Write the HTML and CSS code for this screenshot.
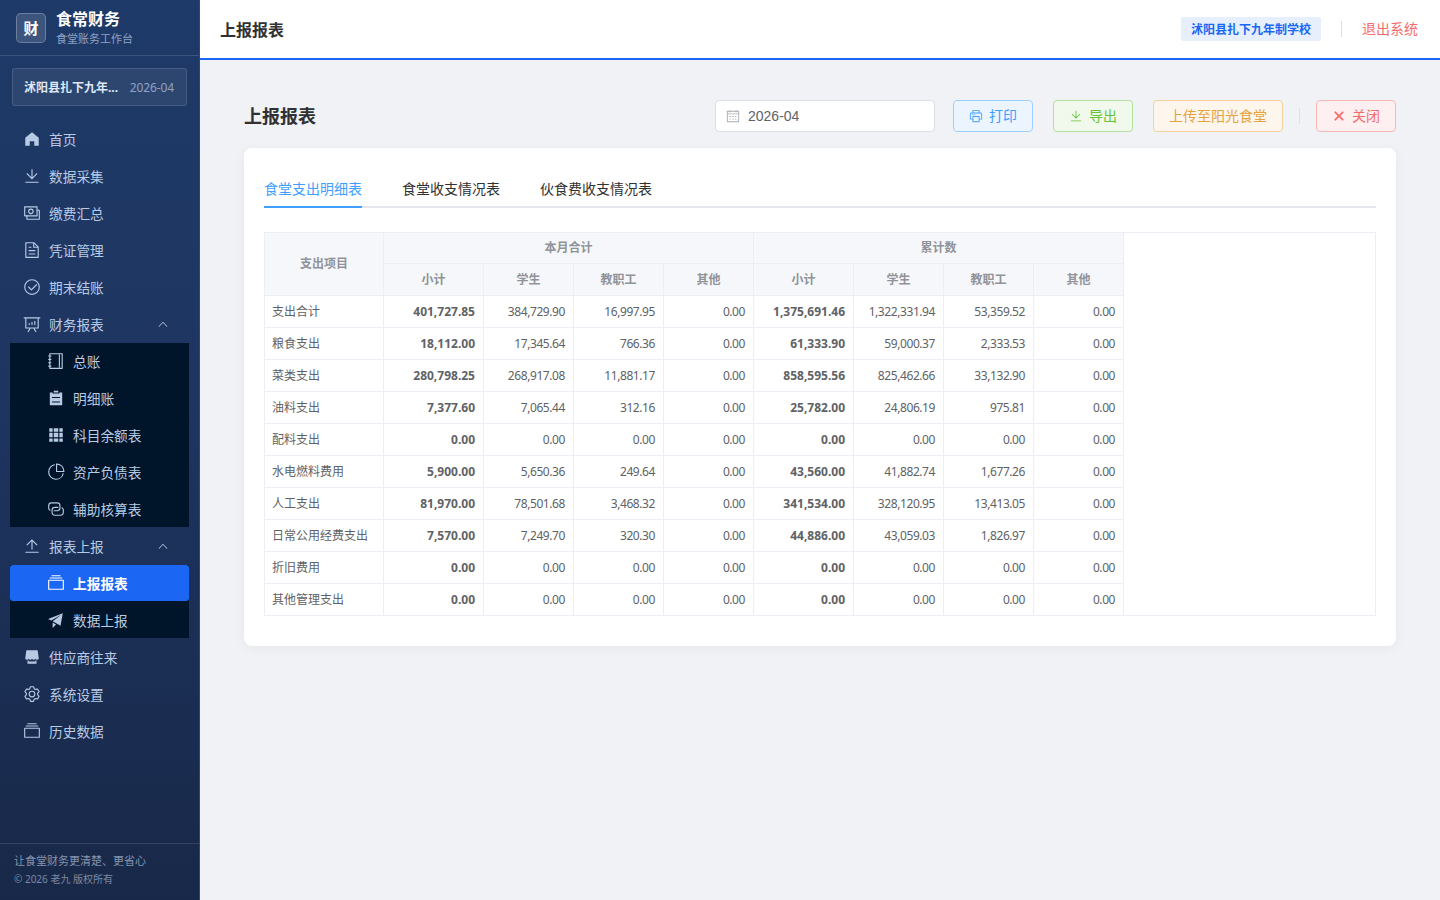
FILE: index.html
```html
<!DOCTYPE html>
<html lang="zh-CN">
<head>
<meta charset="utf-8">
<title>上报报表</title>
<link rel="stylesheet" href="styles.css">
</head>
<body>
<svg class="sprite" aria-hidden="true">
  <symbol id="i-home" viewBox="0 0 1024 1024"><path d="M512 128 128 447.936V896h255.936V640H640v256h255.936V447.936z"/></symbol>
  <symbol id="i-download" viewBox="0 0 1024 1024"><path d="M160 832h704a32 32 0 1 1 0 64H160a32 32 0 1 1 0-64m384-253.696 236.288-236.352 45.248 45.248L508.8 704 192 387.2l45.248-45.248L480 584.704V128h64z"/></symbol>
  <symbol id="i-upload" viewBox="0 0 1024 1024"><path d="M160 832h704a32 32 0 1 1 0 64H160a32 32 0 1 1 0-64m384-578.304V704h-64V247.296L237.248 490.048 192 444.8 508.8 128l316.8 316.8-45.312 45.248z"/></symbol>
  <symbol id="i-money" viewBox="0 0 1024 1024"><path d="M256 640v192h640V384H768v-64h150.976c14.272 0 19.456 1.472 24.64 4.288a29.056 29.056 0 0 1 12.16 12.096c2.752 5.184 4.224 10.368 4.224 24.64v493.952c0 14.272-1.472 19.456-4.288 24.64a29.056 29.056 0 0 1-12.096 12.16c-5.184 2.752-10.368 4.224-24.64 4.224H233.024c-14.272 0-19.456-1.472-24.64-4.288a29.056 29.056 0 0 1-12.16-12.096c-2.688-5.184-4.224-10.368-4.224-24.576V640z"/><path d="M768 192H128v448h640zm64-22.976v493.952c0 14.272-1.472 19.456-4.288 24.64a29.056 29.056 0 0 1-12.096 12.16c-5.184 2.752-10.368 4.224-24.64 4.224H105.024c-14.272 0-19.456-1.472-24.64-4.288a29.056 29.056 0 0 1-12.16-12.096C65.536 682.432 64 677.248 64 663.04V169.024c0-14.272 1.472-19.456 4.288-24.64a29.056 29.056 0 0 1 12.096-12.16C85.568 129.536 90.752 128 104.96 128h685.952c14.272 0 19.456 1.472 24.64 4.288a29.056 29.056 0 0 1 12.16 12.096c2.752 5.184 4.224 10.368 4.224 24.64z"/><path d="M448 576a160 160 0 1 1 0-320 160 160 0 0 1 0 320m0-64a96 96 0 1 0 0-192 96 96 0 0 0 0 192"/></symbol>
  <symbol id="i-document" viewBox="0 0 1024 1024"><path d="M832 384H576V128H192v768h640zm-26.496-64L640 154.496V320zM160 64h480l256 256v608a32 32 0 0 1-32 32H160a32 32 0 0 1-32-32V96a32 32 0 0 1 32-32m160 448h384v64H320zm0-192h160v64H320zm0 384h384v64H320z"/></symbol>
  <symbol id="i-check" viewBox="0 0 1024 1024"><path d="M512 896a384 384 0 1 0 0-768 384 384 0 0 0 0 768m0 64a448 448 0 1 1 0-896 448 448 0 0 1 0 896"/><path d="M745.344 361.344a32 32 0 0 1 45.312 45.312l-288 288a32 32 0 0 1-45.312 0l-160-160a32 32 0 1 1 45.312-45.312L480 626.752z"/></symbol>
  <symbol id="i-analysis" viewBox="0 0 1024 1024"><path d="m665.216 768 110.848 192h-73.856L591.36 768H433.024L322.176 960H248.32l110.848-192H160a32 32 0 0 1-32-32V192H64a32 32 0 0 1 0-64h896a32 32 0 1 1 0 64h-64v544a32 32 0 0 1-32 32zM832 192H192v512h640zM352 448a32 32 0 0 1 32 32v64a32 32 0 0 1-64 0v-64a32 32 0 0 1 32-32m160-64a32 32 0 0 1 32 32v128a32 32 0 0 1-64 0V416a32 32 0 0 1 32-32m160-64a32 32 0 0 1 32 32v192a32 32 0 1 1-64 0V352a32 32 0 0 1 32-32"/></symbol>
  <symbol id="i-arrow-up" viewBox="0 0 1024 1024"><path d="m488.832 344.32-339.84 356.672a32 32 0 0 0 0 44.16l.384.384a29.44 29.44 0 0 0 42.688 0l320-335.872 319.872 335.872a29.44 29.44 0 0 0 42.688 0l.384-.384a32 32 0 0 0 0-44.16L535.168 344.32a32 32 0 0 0-46.336 0"/></symbol>
  <symbol id="i-notebook" viewBox="0 0 1024 1024"><path d="M192 128v768h640V128zm-32-64h704a32 32 0 0 1 32 32v832a32 32 0 0 1-32 32H160a32 32 0 0 1-32-32V96a32 32 0 0 1 32-32"/><path d="M672 128h64v768h-64zM96 192h128q32 0 32 32t-32 32H96q-32 0-32-32t32-32m0 192h128q32 0 32 32t-32 32H96q-32 0-32-32t32-32m0 192h128q32 0 32 32t-32 32H96q-32 0-32-32t32-32m0 192h128q32 0 32 32t-32 32H96q-32 0-32-32t32-32"/></symbol>
  <symbol id="i-list" viewBox="0 0 1024 1024"><path d="M704 192h160v736H160V192h160v64h384zM288 512h448v-64H288zm0 256h448v-64H288zm96-576V96h256v96z"/></symbol>
  <symbol id="i-grid" viewBox="0 0 1024 1024"><path d="M640 384v256H384V384zm64 0h192v256H704zm-64 512H384V704h256zm64 0V704h192v192zm-64-768v192H384V128zm64 0h192v192H704zM320 384v256H128V384zm0 512H128V704h192zm0-768v192H128V128z"/></symbol>
  <symbol id="i-pie" viewBox="0 0 1024 1024"><path d="M448 68.48v64.832A384.128 384.128 0 0 0 512 896a384.128 384.128 0 0 0 378.688-320h64.768A448.128 448.128 0 0 1 64 512 448.128 448.128 0 0 1 448 68.48z"/><path d="M576 97.28V448h350.72A384.064 384.064 0 0 0 576 97.28zM512 64V33.152A448 448 0 0 1 990.848 512H512V64z"/></symbol>
  <symbol id="i-connection" viewBox="0 0 1024 1024"><path d="M640 384v64H448a128 128 0 0 0-128 128v128a128 128 0 0 0 128 128h320a128 128 0 0 0 128-128V576a128 128 0 0 0-64-110.848V394.88c74.56 26.368 128 97.472 128 181.056v128a192 192 0 0 1-192 192H448a192 192 0 0 1-192-192V576a192 192 0 0 1 192-192z"/><path d="M384 640v-64h192a128 128 0 0 0 128-128V320a128 128 0 0 0-128-128H256a128 128 0 0 0-128 128v128a128 128 0 0 0 64 110.848v70.272A192.064 192.064 0 0 1 64 448V320a192 192 0 0 1 192-192h320a192 192 0 0 1 192 192v128a192 192 0 0 1-192 192z"/></symbol>
  <symbol id="i-files" viewBox="0 0 1024 1024"><path d="M128 384v448h768V384zm-32-64h832a32 32 0 0 1 32 32v512a32 32 0 0 1-32 32H96a32 32 0 0 1-32-32V352a32 32 0 0 1 32-32m64-128h704v64H160zm96-128h512v64H256z"/></symbol>
  <symbol id="i-promotion" viewBox="0 0 1024 1024"><path d="m64 448 832-320-128 704-446.08-243.328L832 192 242.816 545.472zm256 512V657.024L512 768z"/></symbol>
  <symbol id="i-shop" viewBox="0 0 1024 1024"><path d="M704 704h64v192H256V704h64v64h384zm188.544-152.192C894.528 559.616 896 567.616 896 576a96 96 0 1 1-192 0 96 96 0 1 1-192 0 96 96 0 1 1-192 0 96 96 0 1 1-192 0c0-8.384 1.408-16.384 3.392-24.192L192 128h640z"/></symbol>
  <symbol id="i-setting" viewBox="0 0 1024 1024"><path d="M600.704 64a32 32 0 0 1 30.464 22.208l35.2 109.376c14.784 7.232 28.928 15.36 42.432 24.512l112.384-24.192a32 32 0 0 1 34.432 15.36L944.32 364.8a32 32 0 0 1-4.032 37.504l-77.12 85.12a357.12 357.12 0 0 1 0 49.024l77.12 85.248a32 32 0 0 1 4.032 37.504l-88.704 153.6a32 32 0 0 1-34.432 15.296L708.8 803.904c-13.44 9.088-27.648 17.28-42.368 24.512l-35.264 109.376A32 32 0 0 1 600.704 960H423.296a32 32 0 0 1-30.464-22.208L357.696 828.48a351.616 351.616 0 0 1-42.56-24.64l-112.32 24.256a32 32 0 0 1-34.432-15.36L79.68 659.2a32 32 0 0 1 4.032-37.504l77.12-85.248a357.12 357.12 0 0 1 0-48.896l-77.12-85.248A32 32 0 0 1 79.68 364.8l88.704-153.6a32 32 0 0 1 34.432-15.296l112.32 24.256c13.568-9.152 27.776-17.408 42.56-24.64l35.2-109.312A32 32 0 0 1 423.232 64H600.64zm-23.424 64H446.72l-36.352 113.088-24.512 11.968a294.113 294.113 0 0 0-34.816 20.096l-22.656 15.36-116.224-25.088-65.28 113.152 79.68 88.192-1.92 27.136a293.12 293.12 0 0 0 0 40.192l1.92 27.136-79.808 88.192 65.344 113.152 116.224-25.024 22.656 15.296a294.113 294.113 0 0 0 34.816 20.096l24.512 11.968L446.72 896h130.688l36.48-113.152 24.448-11.904a288.282 288.282 0 0 0 34.752-20.096l22.592-15.296 116.288 25.024 65.28-113.152-79.744-88.192 1.92-27.136a293.12 293.12 0 0 0 0-40.256l-1.92-27.136 79.808-88.128-65.344-113.152-116.288 24.96-22.592-15.232a287.616 287.616 0 0 0-34.752-20.096l-24.448-11.904L577.344 128zM512 320a192 192 0 1 1 0 384 192 192 0 0 1 0-384m0 64a128 128 0 1 0 0 256 128 128 0 0 0 0-256"/></symbol>
  <symbol id="i-calendar" viewBox="0 0 1024 1024"><path d="M128 384v512h768V192H768v32a32 32 0 1 1-64 0v-32H320v32a32 32 0 0 1-64 0v-32H128v128h768v64zm192-256h384V96a32 32 0 1 1 64 0v32h160a32 32 0 0 1 32 32v768a32 32 0 0 1-32 32H96a32 32 0 0 1-32-32V160a32 32 0 0 1 32-32h160V96a32 32 0 0 1 64 0zm-32 384h64a32 32 0 0 1 0 64h-64a32 32 0 0 1 0-64m0 192h64a32 32 0 1 1 0 64h-64a32 32 0 1 1 0-64m192-192h64a32 32 0 0 1 0 64h-64a32 32 0 0 1 0-64m0 192h64a32 32 0 1 1 0 64h-64a32 32 0 1 1 0-64m192-192h64a32 32 0 1 1 0 64h-64a32 32 0 1 1 0-64m0 192h64a32 32 0 1 1 0 64h-64a32 32 0 1 1 0-64"/></symbol>
  <symbol id="i-printer" viewBox="0 0 1024 1024"><path d="M256 768H105.024c-14.272 0-19.456-1.472-24.64-4.288a29.056 29.056 0 0 1-12.16-12.096C65.536 746.432 64 741.248 64 727.04V379.072c0-42.816 4.48-58.304 12.8-73.984 8.384-15.616 20.672-27.904 36.288-36.288 15.68-8.32 31.168-12.8 73.984-12.8H256V64h512v192h68.928c42.816 0 58.304 4.48 73.984 12.8 15.616 8.384 27.904 20.672 36.288 36.288 8.32 15.68 12.8 31.168 12.8 73.984v347.904c0 14.272-1.472 19.456-4.288 24.64a29.056 29.056 0 0 1-12.096 12.16c-5.184 2.752-10.368 4.224-24.64 4.224H768v192H256zm64-192v320h384V576zm-64 128V512h512v192h128V379.072c0-29.376-1.408-36.48-5.248-43.776a23.296 23.296 0 0 0-10.048-10.048c-7.232-3.84-14.4-5.248-43.776-5.248H187.072c-29.376 0-36.48 1.408-43.776 5.248a23.296 23.296 0 0 0-10.048 10.048c-3.84 7.232-5.248 14.4-5.248 43.776V704zm64-448h384V128H320zm-64 128h64v64h-64zm128 0h64v64h-64z"/></symbol>
  <symbol id="i-close" viewBox="0 0 1024 1024"><path d="M195.2 195.2a64 64 0 0 1 90.496 0L512 421.504 738.304 195.2a64 64 0 0 1 90.496 90.496L602.496 512 828.8 738.304a64 64 0 0 1-90.496 90.496L512 602.496 285.696 828.8a64 64 0 0 1-90.496-90.496L421.504 512 195.2 285.696a64 64 0 0 1 0-90.496"/></symbol>
</svg>

<div class="app">
  <aside class="sidebar">
    <div class="brand">
      <div class="logo">财</div>
      <div class="brand-text">
        <div class="brand-name">食常财务</div>
        <div class="brand-sub">食堂账务工作台</div>
      </div>
    </div>
    <div class="account">
      <span class="account-name">沭阳县扎下九年...</span>
      <span class="account-period">2026-04</span>
    </div>
    <nav class="menu">
      <a class="item"><svg class="icon"><use href="#i-home"/></svg><span>首页</span></a>
      <a class="item"><svg class="icon"><use href="#i-download"/></svg><span>数据采集</span></a>
      <a class="item"><svg class="icon"><use href="#i-money"/></svg><span>缴费汇总</span></a>
      <a class="item"><svg class="icon"><use href="#i-document"/></svg><span>凭证管理</span></a>
      <a class="item"><svg class="icon"><use href="#i-check"/></svg><span>期末结账</span></a>
      <a class="item"><svg class="icon"><use href="#i-analysis"/></svg><span>财务报表</span><svg class="arrow"><use href="#i-arrow-up"/></svg></a>
      <div class="submenu">
        <a class="item"><svg class="icon"><use href="#i-notebook"/></svg><span>总账</span></a>
        <a class="item"><svg class="icon"><use href="#i-list"/></svg><span>明细账</span></a>
        <a class="item"><svg class="icon"><use href="#i-grid"/></svg><span>科目余额表</span></a>
        <a class="item"><svg class="icon"><use href="#i-pie"/></svg><span>资产负债表</span></a>
        <a class="item"><svg class="icon"><use href="#i-connection"/></svg><span>辅助核算表</span></a>
      </div>
      <a class="item"><svg class="icon"><use href="#i-upload"/></svg><span>报表上报</span><svg class="arrow"><use href="#i-arrow-up"/></svg></a>
      <div class="submenu">
        <a class="item active"><svg class="icon"><use href="#i-files"/></svg><span>上报报表</span></a>
        <a class="item"><svg class="icon"><use href="#i-promotion"/></svg><span>数据上报</span></a>
      </div>
      <a class="item"><svg class="icon"><use href="#i-shop"/></svg><span>供应商往来</span></a>
      <a class="item"><svg class="icon"><use href="#i-setting"/></svg><span>系统设置</span></a>
      <a class="item"><svg class="icon"><use href="#i-files"/></svg><span>历史数据</span></a>
    </nav>
    <footer class="side-foot">
      <div class="slogan">让食堂财务更清楚、更省心</div>
      <div class="copyright">© 2026 老九 版权所有</div>
    </footer>
  </aside>

  <div class="main">
    <header class="topbar">
      <div class="topbar-title">上报报表</div>
      <div class="topbar-right">
        <span class="school">沭阳县扎下九年制学校</span>
        <span class="divider"></span>
        <a class="logout">退出系统</a>
      </div>
    </header>

    <main class="page">
      <div class="page-head">
        <h2 class="page-title">上报报表</h2>
        <div class="tools">
          <div class="date"><svg class="ic14"><use href="#i-calendar"/></svg><span>2026-04</span></div>
          <button class="btn primary"><svg class="ic14"><use href="#i-printer"/></svg><span>打印</span></button>
          <button class="btn success"><svg class="ic14"><use href="#i-download"/></svg><span>导出</span></button>
          <button class="btn warning"><span>上传至阳光食堂</span></button>
          <span class="divider tool-divider"></span>
          <button class="btn danger"><svg class="ic14"><use href="#i-close"/></svg><span>关闭</span></button>
        </div>
      </div>

      <section class="card">
        <div class="tabs">
          <div class="tab on">食堂支出明细表</div>
          <div class="tab">食堂收支情况表</div>
          <div class="tab">伙食费收支情况表</div>
        </div>
        <div class="table-wrap">
          <table class="report">
            <colgroup><col class="c-name"><col class="c-sum"><col class="c-num"><col class="c-num"><col class="c-num"><col class="c-sum"><col class="c-num"><col class="c-num"><col class="c-num"></colgroup>
            <thead>
              <tr class="group"><th rowspan="2">支出项目</th><th colspan="4">本月合计</th><th colspan="4">累计数</th></tr>
              <tr><th>小计</th><th>学生</th><th>教职工</th><th>其他</th><th>小计</th><th>学生</th><th>教职工</th><th>其他</th></tr>
            </thead>
            <tbody>
              <tr><td>支出合计</td><td class="sum">401,727.85</td><td>384,729.90</td><td>16,997.95</td><td>0.00</td><td class="sum">1,375,691.46</td><td>1,322,331.94</td><td>53,359.52</td><td>0.00</td></tr>
              <tr><td>粮食支出</td><td class="sum">18,112.00</td><td>17,345.64</td><td>766.36</td><td>0.00</td><td class="sum">61,333.90</td><td>59,000.37</td><td>2,333.53</td><td>0.00</td></tr>
              <tr><td>菜类支出</td><td class="sum">280,798.25</td><td>268,917.08</td><td>11,881.17</td><td>0.00</td><td class="sum">858,595.56</td><td>825,462.66</td><td>33,132.90</td><td>0.00</td></tr>
              <tr><td>油料支出</td><td class="sum">7,377.60</td><td>7,065.44</td><td>312.16</td><td>0.00</td><td class="sum">25,782.00</td><td>24,806.19</td><td>975.81</td><td>0.00</td></tr>
              <tr><td>配料支出</td><td class="sum">0.00</td><td>0.00</td><td>0.00</td><td>0.00</td><td class="sum">0.00</td><td>0.00</td><td>0.00</td><td>0.00</td></tr>
              <tr><td>水电燃料费用</td><td class="sum">5,900.00</td><td>5,650.36</td><td>249.64</td><td>0.00</td><td class="sum">43,560.00</td><td>41,882.74</td><td>1,677.26</td><td>0.00</td></tr>
              <tr><td>人工支出</td><td class="sum">81,970.00</td><td>78,501.68</td><td>3,468.32</td><td>0.00</td><td class="sum">341,534.00</td><td>328,120.95</td><td>13,413.05</td><td>0.00</td></tr>
              <tr><td>日常公用经费支出</td><td class="sum">7,570.00</td><td>7,249.70</td><td>320.30</td><td>0.00</td><td class="sum">44,886.00</td><td>43,059.03</td><td>1,826.97</td><td>0.00</td></tr>
              <tr><td>折旧费用</td><td class="sum">0.00</td><td>0.00</td><td>0.00</td><td>0.00</td><td class="sum">0.00</td><td>0.00</td><td>0.00</td><td>0.00</td></tr>
              <tr><td>其他管理支出</td><td class="sum">0.00</td><td>0.00</td><td>0.00</td><td>0.00</td><td class="sum">0.00</td><td>0.00</td><td>0.00</td><td>0.00</td></tr>
            </tbody>
          </table>
        </div>
      </section>
    </main>
  </div>
</div>
</body>
</html>
```
FILE: styles.css
```css
* { box-sizing: border-box; }
body {
  margin: 0;
  font-family: "Noto Sans", "Noto Sans CJK SC", sans-serif;
  font-size: 14px;
  color: #303133;
  background: #f0f2f5;
}
.sprite { display: none; }
svg { fill: currentColor; flex: none; }
.app { display: flex; height: 100vh; overflow: hidden; }

/* sidebar */
.sidebar {
  width: 200px;
  flex: none;
  display: flex;
  flex-direction: column;
  background: linear-gradient(180deg, #1e3a68 0%, #1e3560 45%, #182848 100%);
  border-right: 1px solid #30476f;
}
.brand {
  height: 56px;
  display: flex;
  align-items: center;
  gap: 10px;
  padding: 0 16px;
  border-bottom: 1px solid rgba(255, 255, 255, .14);
}
.logo {
  width: 30px;
  height: 30px;
  border: 1px solid rgba(255, 255, 255, .25);
  border-radius: 5px;
  background: rgba(255, 255, 255, .14);
  color: #fff;
  font-size: 15px;
  font-weight: 700;
  line-height: 28px;
  text-align: center;
}
.brand-name { color: #fff; font-size: 16px; font-weight: 700; line-height: 20px; }
.brand-sub { color: #8fa3c4; font-size: 11px; line-height: 16px; margin-top: 2px; }
.account {
  height: 38px;
  margin: 12px 12px 15px;
  padding: 0 12px 0 11px;
  display: flex;
  align-items: center;
  justify-content: space-between;
  border: 1px solid rgba(255, 255, 255, .12);
  border-radius: 3px;
  background: rgba(255, 255, 255, .07);
  font-size: 12px;
  white-space: nowrap;
}
.account-name { color: #dfe8f6; font-weight: 700; }
.account-period { color: #8fa3c4; letter-spacing: -.1px; }
.menu { flex: 1; display: flex; flex-direction: column; gap: 1px; padding: 0 10px; }
.item {
  height: 36px;
  flex: none;
  display: flex;
  align-items: center;
  gap: 8px;
  padding-left: 13px;
  color: #b9cae4;
  font-size: 13.7px;
}
.icon { width: 18px; height: 18px; }
.arrow { width: 12px; height: 12px; margin-left: auto; margin-right: 20px; }
.submenu { display: flex; flex-direction: column; gap: 1px; background: #001529; }
.submenu .item { padding-left: 37px; }
.item.active { background: #1b66f3; color: #fff; font-weight: 700; border-radius: 3px; }
.side-foot {
  height: 57px;
  padding: 8px 14px 0;
  border-top: 1px solid rgba(255, 255, 255, .12);
  color: #8795ae;
}
.slogan { font-size: 11px; line-height: 17px; }
.copyright { font-size: 10px; line-height: 15px; margin-top: 3px; color: #7d89a0; }

/* header */
.main { flex: 1; min-width: 0; display: flex; flex-direction: column; }
.topbar {
  height: 60px;
  display: flex;
  align-items: center;
  justify-content: space-between;
  padding: 0 22px 0 20px;
  background: #fff;
  border-bottom: 2px solid #1b66f3;
}
.topbar-title { font-size: 16px; font-weight: 700; }
.topbar-right { display: flex; align-items: center; gap: 20px; }
.school {
  height: 24px;
  padding: 0 10px;
  border-radius: 2px;
  background: #e6effb;
  color: #1b66f3;
  font-size: 12px;
  font-weight: 700;
  line-height: 25px;
}
.divider { width: 1px; height: 16px; background: #dcdfe6; }
.logout { color: #f56c6c; padding-bottom: 2px; }

/* page */
.page { flex: 1; padding: 40px 44px; }
.page-head { display: flex; align-items: center; justify-content: space-between; height: 32px; }
.page-title { margin: 0; font-size: 18px; font-weight: 700; line-height: 24px; padding-bottom: 1px; }
.tools { display: flex; align-items: center; gap: 20px; }
.date {
  width: 220px;
  height: 32px;
  display: flex;
  align-items: center;
  gap: 8px;
  margin-right: -2px;
  padding-left: 10px;
  border: 1px solid #dcdfe6;
  border-radius: 4px;
  background: #fff;
  color: #606266;
  font: 14px "Liberation Sans", sans-serif;
}
.date svg { color: #a8abb2; }
.ic14 { width: 14px; height: 14px; }
.btn {
  height: 32px;
  display: flex;
  align-items: center;
  gap: 6px;
  padding: 0 15px;
  border: 1px solid;
  border-radius: 4px;
  font: inherit;
  line-height: 1;
}
.primary { color: #409eff; background: #ecf5ff; border-color: #a0cfff; }
.success { color: #67c23a; background: #f0f9eb; border-color: #b3e19d; }
.warning { color: #e6a23c; background: #fdf6ec; border-color: #f3d19e; }
.danger { color: #f56c6c; background: #fef0f0; border-color: #fab6b6; }
.tool-divider { margin: 0 -4px; }
.card {
  height: 498px;
  margin-top: 16px;
  padding: 20px;
  border-radius: 8px;
  background: #fff;
  box-shadow: 0 2px 12px rgba(0, 0, 0, .05);
}
.tabs { display: flex; gap: 40px; height: 40px; border-bottom: 2px solid #e4e7ed; }
.tab { height: 40px; line-height: 41px; }
.tab.on { color: #409eff; border-bottom: 2px solid #409eff; }
.table-wrap { margin-top: 24px; border: 1px solid #ebeef5; }
.report {
  width: 859px;
  table-layout: fixed;
  border-collapse: separate;
  border-spacing: 0;
  font-size: 12px;
  color: #606266;
}
.c-name { width: 119px; }
.c-sum { width: 100px; }
.c-num { width: 90px; }
.report th, .report td {
  height: 32px;
  padding: 0 8px;
  line-height: 20px;
  border-right: 1px solid #ebeef5;
  border-bottom: 1px solid #ebeef5;
  white-space: nowrap;
}
.report th { background: #f5f7fa; color: #909399; font-weight: 700; text-align: center; }
.report .group th { height: 31px; }
.report td { text-align: right; letter-spacing: -.42px; }
.report td:first-child { text-align: left; padding-left: 7px; letter-spacing: 0; }
.report .sum { font-weight: 700; letter-spacing: 0; }
.report tbody tr:last-child td { height: 31px; border-bottom: 0; }
```
